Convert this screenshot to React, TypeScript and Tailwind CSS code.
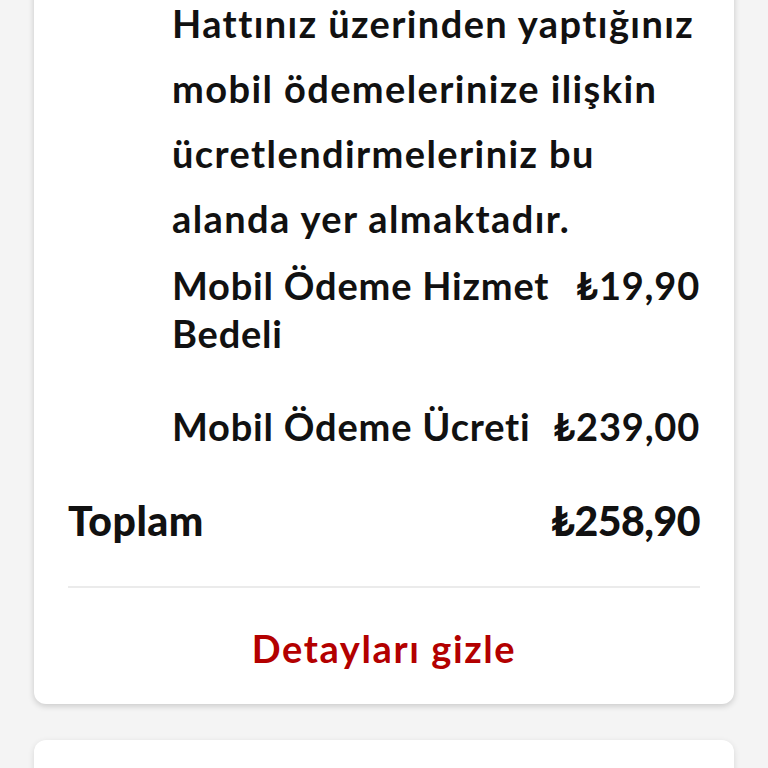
export default function App() {
  return (
    <div className="min-h-screen overflow-hidden bg-[#f4f4f4] px-[34px] font-['Lato','Noto_Sans',sans-serif] text-[#111]">
      {/* kart: ödeme detayları */}
      <div className="-mt-[9px] rounded-b-[12px] bg-white px-[34px] pb-[32px] shadow-[0_2px_6px_rgba(0,0,0,0.18)]">
        <div className="pl-[104px]">
          <p className="text-[38px] font-bold leading-[65px] tracking-[1.4px]">
            Hattınız üzerinden yaptığınız mobil ödemelerinize ilişkin ücretlendirmeleriniz bu alanda yer almaktadır.
          </p>

          <div className="mt-[10px] flex justify-between gap-[8px] text-[38px] font-bold leading-[48px] tracking-[0.8px]">
            <span>
              <span className="whitespace-nowrap">Mobil Ödeme Hizmet</span>
              <br />
              Bedeli
            </span>
            <span className="whitespace-nowrap">₺19,90</span>
          </div>

          <div className="mt-[45px] flex justify-between gap-[8px] text-[38px] font-bold leading-[48px] tracking-[0.8px]">
            <span className="whitespace-nowrap">Mobil Ödeme Ücreti</span>
            <span className="whitespace-nowrap">₺239,00</span>
          </div>
        </div>

        <div className="mt-[47px] flex justify-between text-[41px] font-black leading-[48px]">
          <span className="tracking-[0.5px]">Toplam</span>
          <span className="tracking-[-0.5px]">₺258,90</span>
        </div>

        <div className="mt-[41px] h-[2px] bg-[#ebebeb]" />

        <div className="mt-[36px] text-center text-[38px] font-bold leading-[48px] tracking-[1.6px] text-[#b30000]">
          Detayları gizle
        </div>
      </div>

      <div className="mt-[36px] h-[60px] rounded-t-[12px] bg-white shadow-[0_2px_6px_rgba(0,0,0,0.12)]" />
    </div>
  );
}
